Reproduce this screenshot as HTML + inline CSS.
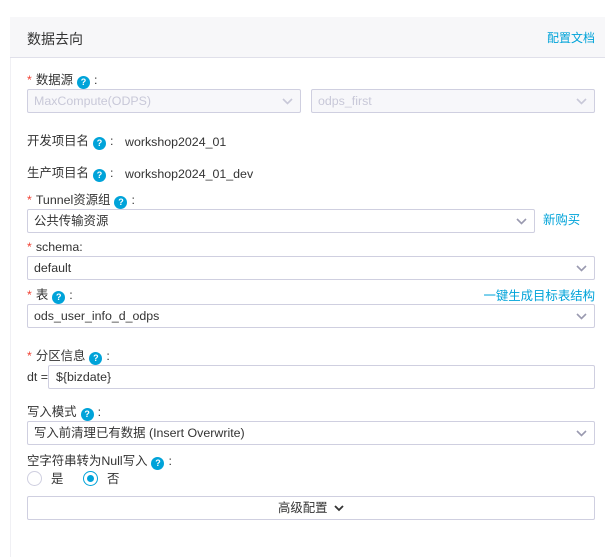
<!DOCTYPE html>
<html><head><meta charset="utf-8"><style>
*{margin:0;padding:0;box-sizing:border-box}
body{width:605px;height:532px;background:#fff;font-family:"Liberation Sans","Noto Sans CJK SC",sans-serif;font-size:12.4px;color:#333;position:relative;overflow:hidden}
.panel{position:absolute;left:10px;top:17px;width:600px;height:540px;border-left:1px solid #f0f0f4}
.hd{position:absolute;left:10px;top:17px;width:595px;height:41px;background:#f7f7f9;border-bottom:1px solid #e0e0ea}
.hd .t{position:absolute;left:17px;top:12px;font-size:14px;color:#333}
.hd .l{position:absolute;right:10px;top:12px;font-size:12px;color:#00a3d9}
.a{position:absolute;white-space:nowrap}
.lbl{line-height:14px}
.star{color:#f04134;margin-right:4px}
.q{display:inline-block;width:13px;height:13px;border-radius:50%;background:#00a3d9;color:#fff;font-size:9px;font-weight:bold;text-align:center;line-height:13px;vertical-align:-1px;margin:0 4px 0 4px}
.sel{position:absolute;height:24px;border:1px solid #cfcfe0;border-radius:2px;background:#fff;padding-left:6px;line-height:22px;color:#333}
.sel.dis{background:#f7f7fa;color:#c8c8d8}
.sel svg{position:absolute;right:7px;top:8px}
.link{color:#00a3d9}
.radio{position:absolute;width:15px;height:15px;border-radius:50%;border:1px solid #cfcfe0;background:#fff}
.radio.on{border-color:#00a3d9}
.radio.on:after{content:"";position:absolute;left:3px;top:3px;width:7px;height:7px;border-radius:50%;background:#00a3d9}
</style></head><body>
<div class="panel"></div>
<div class="hd"><span class="t">数据去向</span><span class="l">配置文档</span></div>

<div class="a lbl" style="left:27px;top:73px"><span class="star">*</span>数据源<span class="q">?</span>:</div>
<div class="sel dis" style="left:27px;top:89px;width:274px">MaxCompute(ODPS)<svg width="11" height="7" viewBox="0 0 11 7"><path d="M1 1l4.5 4.5L10 1" fill="none" stroke="#c8c8d8" stroke-width="1.6"/></svg></div>
<div class="sel dis" style="left:311px;top:89px;width:284px">odps_first<svg width="11" height="7" viewBox="0 0 11 7"><path d="M1 1l4.5 4.5L10 1" fill="none" stroke="#c8c8d8" stroke-width="1.6"/></svg></div>

<div class="a lbl" style="left:27px;top:134px">开发项目名<span class="q">?</span>:</div>
<div class="a lbl" style="left:125px;top:135px">workshop2024_01</div>
<div class="a lbl" style="left:27px;top:166px">生产项目名<span class="q">?</span>:</div>
<div class="a lbl" style="left:125px;top:167px">workshop2024_01_dev</div>

<div class="a lbl" style="left:27px;top:193px"><span class="star">*</span>Tunnel资源组<span class="q">?</span>:</div>
<div class="sel" style="left:27px;top:209px;width:508px">公共传输资源<svg width="11" height="7" viewBox="0 0 11 7"><path d="M1 1l4.5 4.5L10 1" fill="none" stroke="#9a9ab0" stroke-width="1.6"/></svg></div>
<div class="a lbl link" style="left:543px;top:213px">新购买</div>

<div class="a lbl" style="left:27px;top:240px"><span class="star">*</span>schema:</div>
<div class="sel" style="left:27px;top:256px;width:568px">default<svg width="11" height="7" viewBox="0 0 11 7"><path d="M1 1l4.5 4.5L10 1" fill="none" stroke="#9a9ab0" stroke-width="1.6"/></svg></div>

<div class="a lbl" style="left:27px;top:288px"><span class="star">*</span>表<span class="q">?</span>:</div>
<div class="a lbl link" style="right:10px;top:289px">一键生成目标表结构</div>
<div class="sel" style="left:27px;top:304px;width:568px">ods_user_info_d_odps<svg width="11" height="7" viewBox="0 0 11 7"><path d="M1 1l4.5 4.5L10 1" fill="none" stroke="#9a9ab0" stroke-width="1.6"/></svg></div>

<div class="a lbl" style="left:27px;top:349px"><span class="star">*</span>分区信息<span class="q">?</span>:</div>
<div class="a lbl" style="left:27px;top:370px">dt =</div>
<div class="sel" style="left:48px;top:365px;width:547px;padding-left:7px">${bizdate}</div>

<div class="a lbl" style="left:27px;top:405px">写入模式<span class="q">?</span>:</div>
<div class="sel" style="left:27px;top:421px;width:568px">写入前清理已有数据 (Insert Overwrite)<svg width="11" height="7" viewBox="0 0 11 7"><path d="M1 1l4.5 4.5L10 1" fill="none" stroke="#9a9ab0" stroke-width="1.6"/></svg></div>

<div class="a lbl" style="left:27px;top:454px">空字符串转为Null写入<span class="q">?</span>:</div>
<div class="radio" style="left:27px;top:471px"></div>
<div class="a lbl" style="left:51px;top:472px">是</div>
<div class="radio on" style="left:83px;top:471px"></div>
<div class="a lbl" style="left:107px;top:472px">否</div>

<div class="sel" style="left:27px;top:496px;width:568px;text-align:center;padding:0">高级配置 <svg style="position:static;vertical-align:0;margin-left:3px" width="10" height="7" viewBox="0 0 10 7"><path d="M1 1l4 4 4-4" fill="none" stroke="#333" stroke-width="1.8"/></svg></div>
</body></html>
